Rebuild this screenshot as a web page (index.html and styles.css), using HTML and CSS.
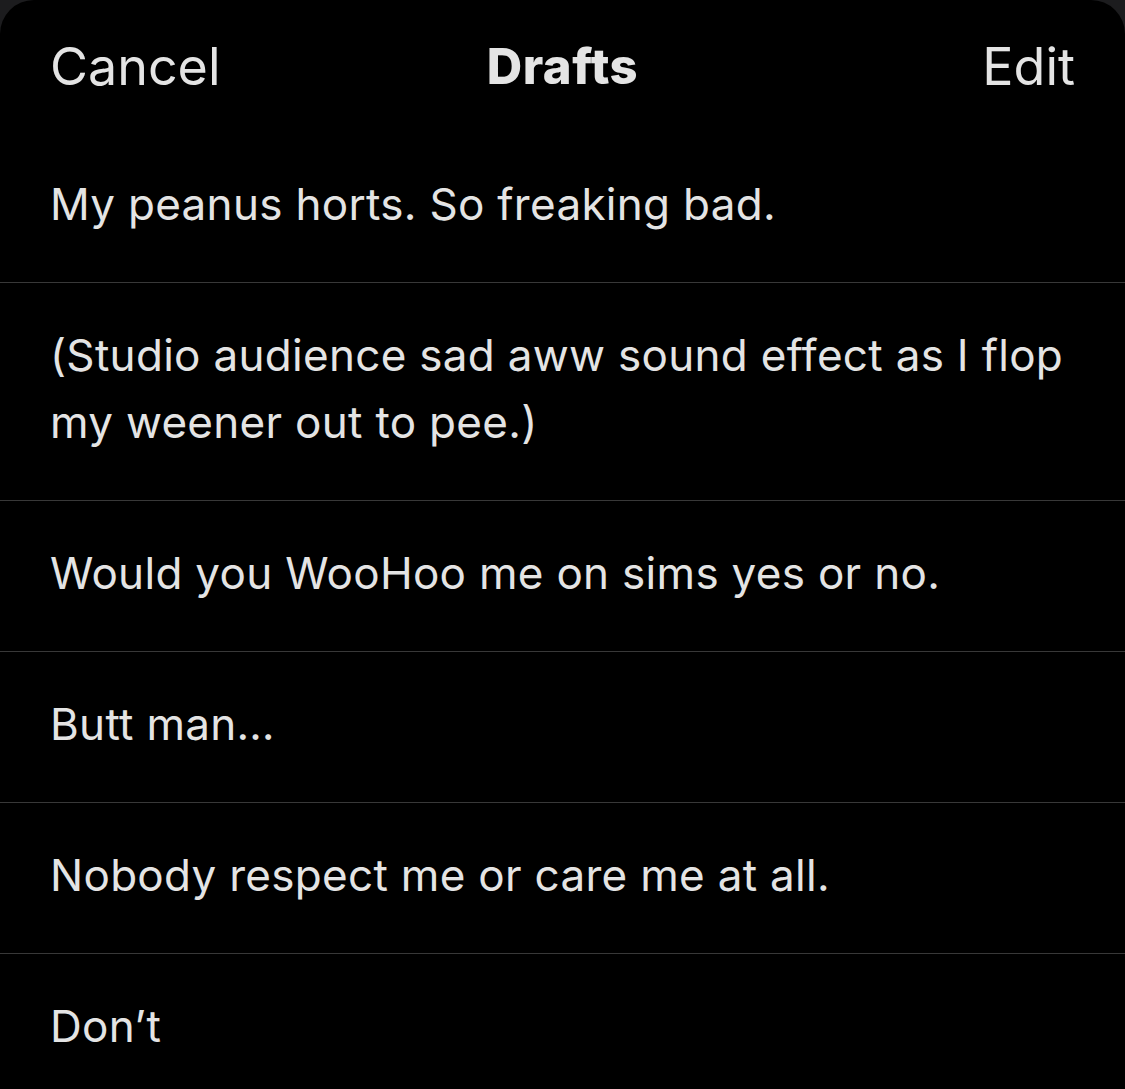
FILE: index.html
```html
<!DOCTYPE html>
<html lang="en">
<head>
    <meta charset="UTF-8">
    <meta name="viewport" content="width=device-width, initial-scale=1.0">
    <title>Drafts</title>
    <link rel="stylesheet" href="styles.css">
</head>
<body>
    <div class="sheet">
        <div class="header">
            <span class="header-btn">Cancel</span>
            <span class="header-title">Drafts</span>
            <span class="header-btn right">Edit</span>
        </div>
        <ul class="drafts">
            <li>My peanus horts. So freaking bad.</li>
            <li>(Studio audience sad aww sound effect as I flop my weener out to pee.)</li>
            <li>Would you WooHoo me on sims yes or no.</li>
            <li>Butt man…</li>
            <li>Nobody respect me or care me at all.</li>
            <li>Don’t</li>
        </ul>
    </div>
</body>
</html>
```

FILE: styles.css
```css
html, body {
    margin: 0;
    padding: 0;
    background: #1c1c1e;
}
body {
    width: 1125px;
    height: 1089px;
    overflow: hidden;
    font-family: Inter, "Liberation Sans", sans-serif;
    color: #e4e4e4;
}
.sheet {
    background: #000;
    border-radius: 34px 34px 0 0;
    height: 100%;
}
.header {
    height: 132px;
    display: grid;
    grid-template-columns: 1fr auto 1fr;
    align-items: center;
    padding: 0 50px;
    font-size: 52px;
}
.header-btn {
    font-weight: 400;
}
.header-btn.right {
    text-align: right;
}
.header-title {
    font-weight: 800;
    font-size: 49px;
    letter-spacing: 0.5px;
}
.drafts {
    list-style: none;
    margin: 0;
    padding: 0;
}
.drafts li {
    padding: 39px 50px 44px;
    font-size: 44px;
    letter-spacing: 0.3px;
    line-height: 67px;
    border-bottom: 1px solid #383838;
}
.drafts li:last-child {
    border-bottom: none;
}
```
